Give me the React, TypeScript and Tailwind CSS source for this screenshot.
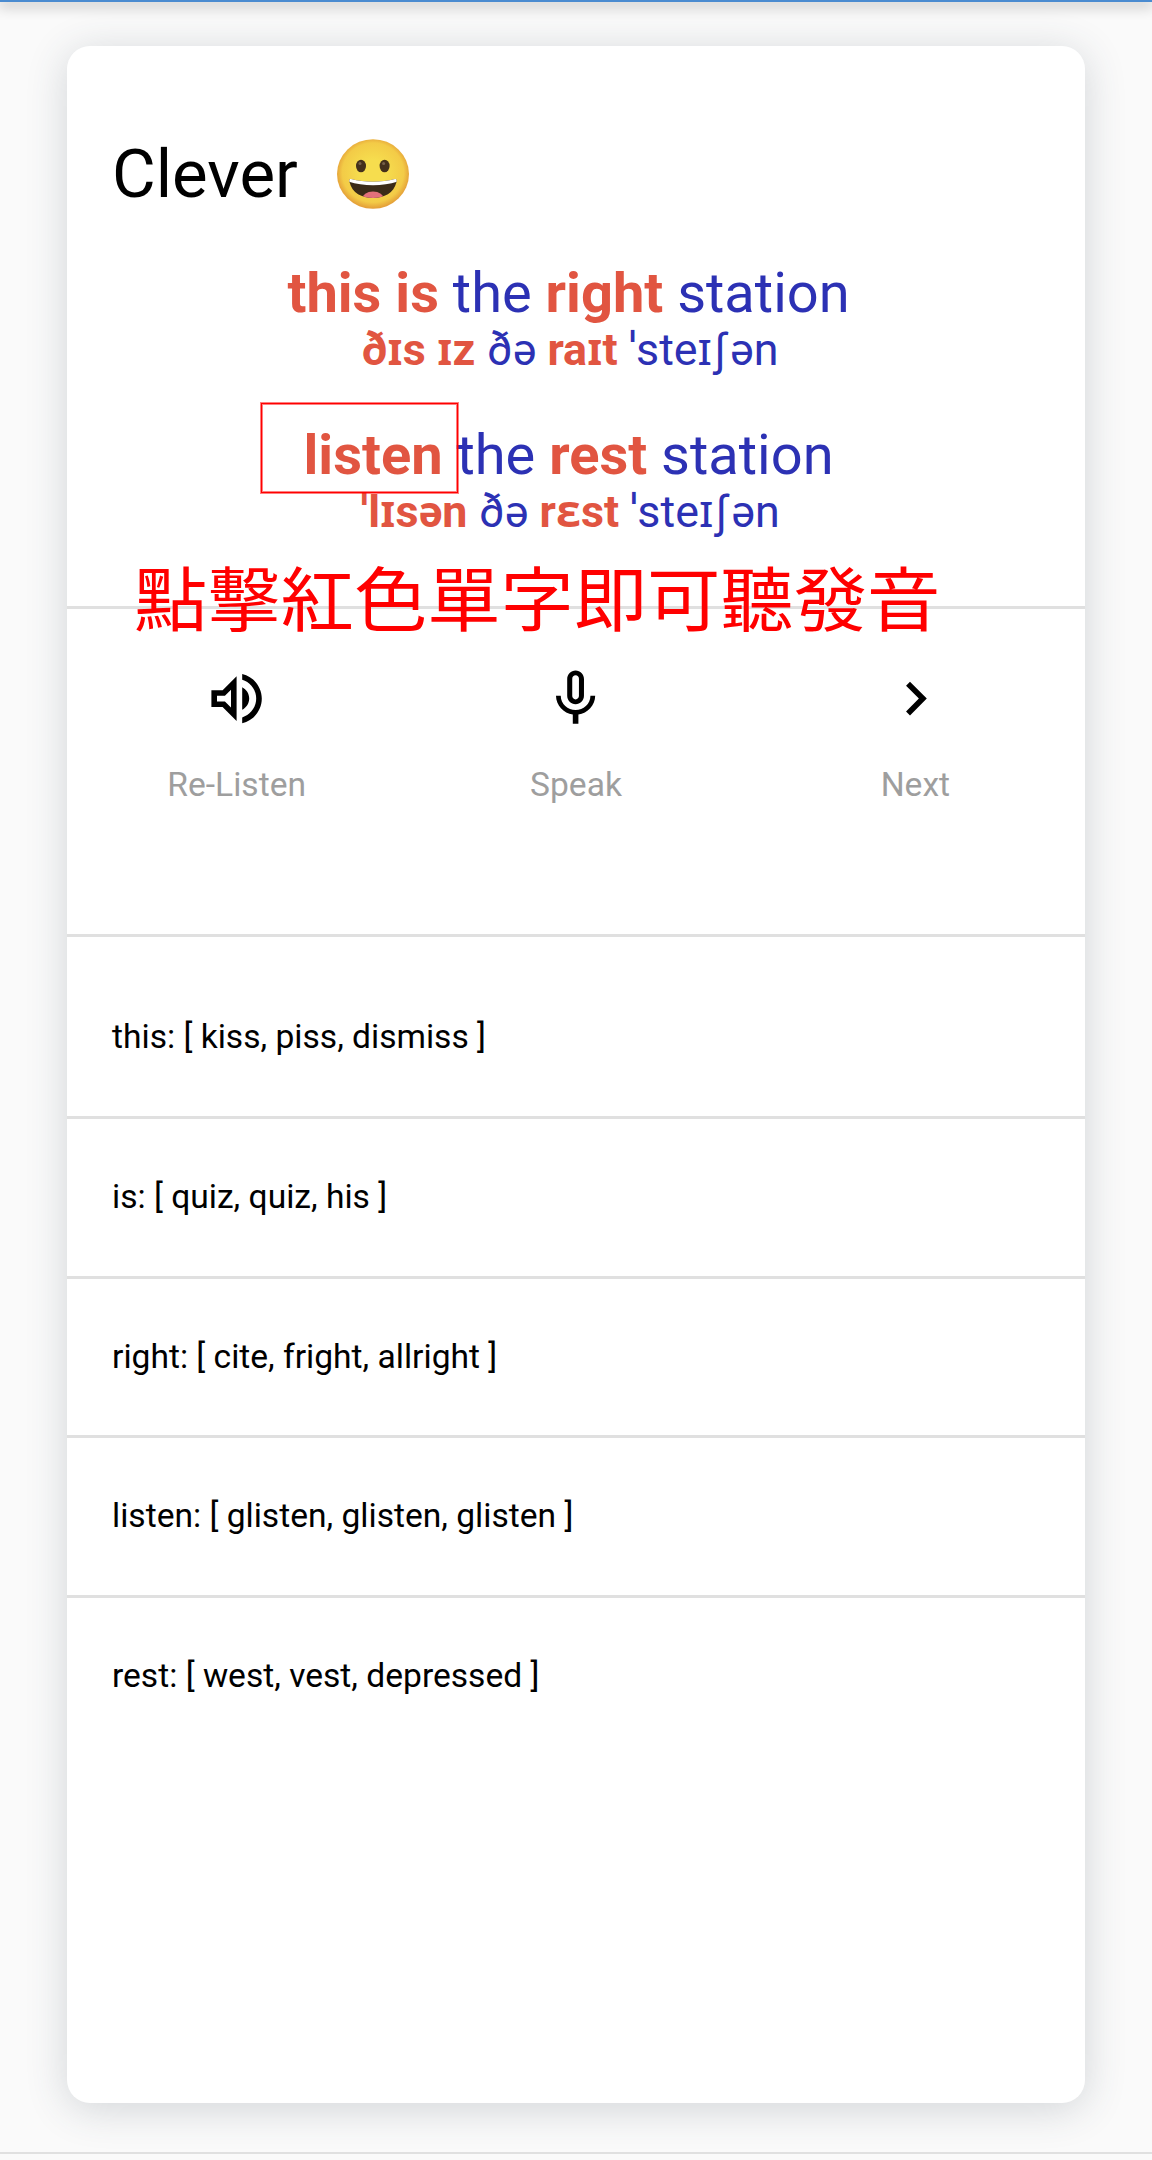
import React from "react";

type Word = { text: string; hot?: boolean };

const phrases: { words: Word[]; ipa: Word[] }[] = [
  {
    words: [
      { text: "this", hot: true },
      { text: "is", hot: true },
      { text: "the" },
      { text: "right", hot: true },
      { text: "station" },
    ],
    ipa: [
      { text: "ðɪs", hot: true },
      { text: "ɪz", hot: true },
      { text: "ðə" },
      { text: "raɪt", hot: true },
      { text: "ˈsteɪʃən" },
    ],
  },
  {
    words: [
      { text: "listen", hot: true },
      { text: "the" },
      { text: "rest", hot: true },
      { text: "station" },
    ],
    ipa: [
      { text: "ˈlɪsən", hot: true },
      { text: "ðə" },
      { text: "rɛst", hot: true },
      { text: "ˈsteɪʃən" },
    ],
  },
];

const actions = [
  {
    label: "Re-Listen",
    d: "M3 9v6h4l5 5V4L7 9H3zm7-.17v6.34L7.83 13H5v-2h2.83L10 8.83zM16.5 12c0-1.77-1.02-3.29-2.5-4.03v8.05c1.48-.73 2.5-2.25 2.5-4.02zM14 3.23v2.06c2.89.86 5 3.54 5 6.71s-2.11 5.85-5 6.71v2.06c4.01-.91 7-4.49 7-8.77 0-4.28-2.99-7.86-7-8.77z",
  },
  {
    label: "Speak",
    d: "M12 14c1.66 0 2.99-1.34 2.99-3L15 5c0-1.66-1.34-3-3-3S9 3.34 9 5v6c0 1.66 1.34 3 3 3zm-1.2-9.1c0-.66.54-1.2 1.2-1.2s1.2.54 1.2 1.2l-.01 6.2c0 .66-.53 1.2-1.19 1.2s-1.2-.54-1.2-1.2V4.9zm6.5 6.1c0 3-2.54 5.1-5.3 5.1S6.7 14 6.7 11H5c0 3.41 2.72 6.23 6 6.72V21h2v-3.28c3.28-.48 6-3.3 6-6.72h-1.7z",
  },
  { label: "Next", d: "M10 6L8.59 7.41 13.17 12l-4.58 4.59L10 18l6-6z" },
];

const rhymes = [
  "this: [ kiss, piss, dismiss ]",
  "is: [ quiz, quiz, his ]",
  "right: [ cite, fright, allright ]",
  "listen: [ glisten, glisten, glisten ]",
  "rest: [ west, vest, depressed ]",
];

// The esh is set in Inter, whose glyph has flat terminals.
function Words({ words }: { words: Word[] }) {
  return (
    <>
      {words.map((w, i) => (
        <span key={i} className={w.hot ? "font-bold text-[#e15541]" : "text-[#2c31b4]"}>
          {w.text.split(/(ʃ)/).map((part, j) =>
            part === "ʃ" ? (
              <span key={j} className="mx-[1.2px] font-['Inter',sans-serif] text-[43px]">
                {part}
              </span>
            ) : (
              part
            ),
          )}
          {"\u00a0"}
        </span>
      ))}
    </>
  );
}

function Grin() {
  return (
    <svg viewBox="0 0 72 70" className="h-[70px] w-[72px]">
      <defs>
        <radialGradient id="face" cx="50%" cy="48%" r="52%">
          <stop offset="0.35" stopColor="#f6dd4e" />
          <stop offset="0.82" stopColor="#f3cb47" />
          <stop offset="1" stopColor="#e39c37" />
        </radialGradient>
        <clipPath id="mouth">
          <path d="M14 40C28 43.500 44 43.500 58 40C59.500 39.500 60 41 59.500 43C57 54 47 59 36 59S15 54 12.500 43C12 41 12.500 39.500 14 40Z" />
        </clipPath>
      </defs>
      <ellipse cx="36" cy="35" rx="36" ry="34.800" fill="url(#face)" />
      <g clipPath="url(#mouth)">
        <rect x="10" y="36" width="52" height="26" fill="#3b2b18" />
        <ellipse cx="36" cy="60.500" rx="11" ry="8" fill="#e3707a" />
        <path d="M10 36H62V42C48 47.500 24 47.500 10 42Z" fill="#fff" />
      </g>
      <ellipse cx="24" cy="27" rx="5" ry="6.300" fill="#44301c" />
      <ellipse cx="47.600" cy="27" rx="5" ry="6.300" fill="#44301c" />
      <circle cx="23" cy="24.500" r="1.500" fill="#77604a" />
      <circle cx="46.600" cy="24.500" r="1.500" fill="#77604a" />
    </svg>
  );
}

export default function App() {
  return (
    <div className="h-[2160px] w-[1152px] overflow-hidden bg-[#fafafa] font-['Roboto','Noto_Sans',sans-serif] text-black">
      <div className="h-[2px] bg-[#4a8bd0] shadow-[0_2px_14px_2px_rgba(0,0,0,0.3)]" />
      <main className="relative mx-[67px] mt-[44px] flex h-[2057px] flex-col rounded-[23px] bg-white shadow-[0_6px_42px_rgba(50,65,80,0.2)]">
        <header className="flex h-[207px] items-start pl-[45px] pt-[88px]">
          <h1 className="w-[225px] text-[67.200px] leading-[80px]">Clever</h1>
          <div className="pt-[5px]">
            <Grin />
          </div>
        </header>
        <section className="flex h-[353px] flex-col gap-[40px] pr-[1px] text-center">
          {phrases.map((p, i) => (
            <div key={i} className="h-[122px] whitespace-nowrap">
              <p className="h-[80px] text-[56px] leading-[80px]">
                <Words words={p.words} />
              </p>
              <p className="h-[42px] text-[44.800px] leading-[33px]">
                <Words words={p.ipa} />
              </p>
            </div>
          ))}
        </section>
        <nav className="grid h-[328px] grid-cols-3 border-t-[3px] border-[#e0e0e0] pt-[56px]">
          {actions.map((a) => (
            <button key={a.label} className="flex flex-col items-center gap-[31px]">
              <svg viewBox="0 0 24 24" className="size-[67.200px] fill-black">
                <path d={a.d} />
              </svg>
              <span className="text-[33.600px] leading-[44px] text-[#9e9e9e]">{a.label}</span>
            </button>
          ))}
        </nav>
        <ul className="flex flex-col text-[33.600px] leading-[40px]">
          {rhymes.map((r, i) => (
            <li
              key={r}
              className={
                i === 0
                  ? "h-[182px] border-t-[3px] border-[#e0e0e0] pl-[45px] pt-[80px]"
                  : "h-[159.700px] border-t-[3px] border-[#e0e0e0] pl-[45px] pt-[58px]"
              }
            >
              {r}
            </li>
          ))}
        </ul>
        <div className="absolute left-[194px] top-[357px] h-[90px] w-[197px] border border-[#ff0000] shadow-[0_0_0_1px_rgba(255,0,0,0.5),inset_0_0_0_1px_rgba(255,0,0,0.5)]" />
        <p className="absolute left-[67px] top-[504px] origin-center scale-y-[0.965] whitespace-nowrap font-['Noto_Sans_CJK_JP',sans-serif] text-[73.300px] leading-[90px] text-[#ff0000]">
          點擊紅色單字即可聽發音
        </p>
      </main>
      <div className="mt-[49px] h-[2px] bg-[#e0e0e0]" />
    </div>
  );
}
